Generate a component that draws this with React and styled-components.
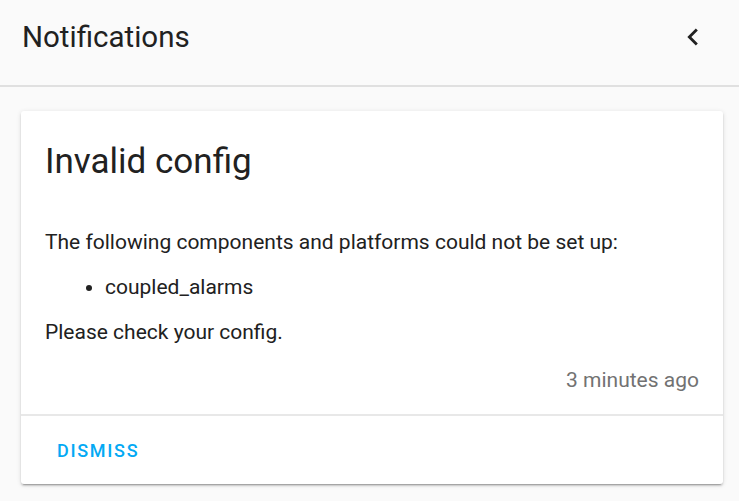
import React from "react";
import styled, { createGlobalStyle } from "styled-components";

const Global = createGlobalStyle`
  html, body { margin: 0; padding: 0; background: #fafafa; }
  body { font-family: Roboto, "Noto Sans", sans-serif; color: #212121; -webkit-font-smoothing: antialiased; }
`;

const Page = styled.div`
  width: 739px;
  height: 501px;
  background: #fafafa;
  display: flex;
  flex-direction: column;
  overflow: hidden;
`;

const Toolbar = styled.header`
  height: 85px;
  flex: none;
  display: flex;
  align-items: center;
  justify-content: space-between;
  padding: 0 29px 0 22px;
  border-bottom: 2px solid #e0e0e0;
  box-sizing: content-box;
`;

const Title = styled.h1`
  margin: 0;
  margin-top: -12px;
  font-size: 29.5px;
  font-weight: 400;
  color: #212121;
`;

const IconButton = styled.button`
  border: 0;
  background: none;
  padding: 0;
  width: 34px;
  height: 34px;
  margin-top: -12px;
  display: flex;
  color: #212121;
`;

const Content = styled.main`
  padding: 24px 16px 0 21px;
`;

const Card = styled.section`
  background: #fff;
  border-radius: 3px;
  box-shadow: 0 2px 2px 0 rgba(0,0,0,0.14), 0 1px 5px 0 rgba(0,0,0,0.12), 0 3px 1px -2px rgba(0,0,0,0.2);
`;

const CardBody = styled.div`
  padding: 27px 24px 9px 24px;
`;

const CardTitle = styled.h2`
  margin: 0 0 33px;
  font-size: 35px;
  font-weight: 400;
  line-height: 48px;
  color: #212121;
`;

const Text = styled.p`
  margin: 0;
  font-size: 21px;
  line-height: 46px;
  color: #212121;
`;

const List = styled.ul`
  margin: 0;
  padding-left: 60px;
  font-size: 21px;
  line-height: 44px;
`;

const Time = styled.div`
  text-align: right;
  font-size: 21px;
  line-height: 50px;
  color: #727272;
`;

const Actions = styled.div`
  border-top: 2px solid #e8e8e8;
  padding: 13px 12px 11px;
`;

const Button = styled.button`
  border: 0;
  background: none;
  font-family: Roboto, sans-serif;
  font-size: 18px;
  font-weight: 500;
  letter-spacing: 1.7px;
  color: #03a9f4;
  text-transform: uppercase;
  padding: 12px 24px;
  line-height: 20px;
  display: block;
`;

export default function App() {
  return (
    <>
      <Global />
      <Page>
        <Toolbar>
          <Title>Notifications</Title>
          <IconButton aria-label="close">
            <svg viewBox="0 0 24 24" width="34" height="34">
              <path fill="currentColor" d="M15.41,16.58L10.83,12L15.41,7.41L14,6L8,12L14,18L15.41,16.58Z" />
            </svg>
          </IconButton>
        </Toolbar>
        <Content>
          <Card>
            <CardBody>
              <CardTitle>Invalid config</CardTitle>
              <Text>The following components and platforms could not be set up:</Text>
              <List>
                <li>coupled_alarms</li>
              </List>
              <Text>Please check your config.</Text>
              <Time>3 minutes ago</Time>
            </CardBody>
            <Actions>
              <Button>Dismiss</Button>
            </Actions>
          </Card>
        </Content>
      </Page>
    </>
  );
}
